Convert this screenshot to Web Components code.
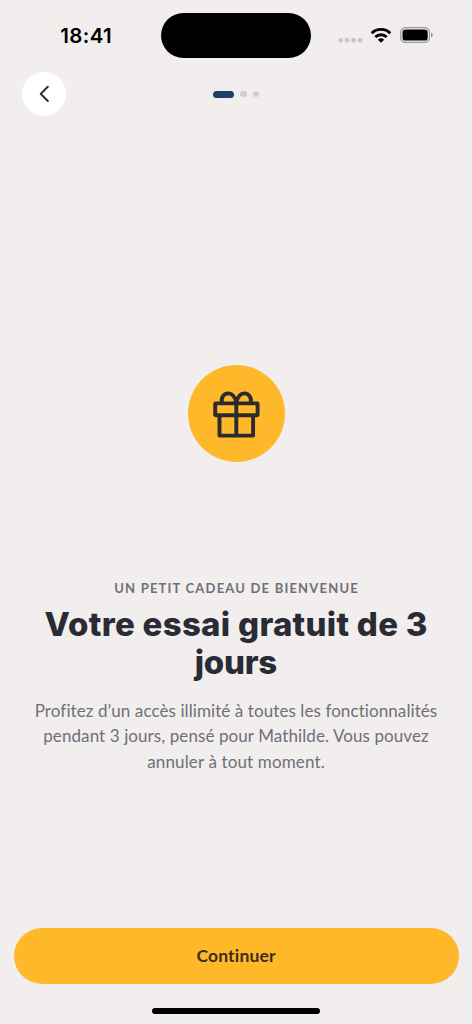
<!DOCTYPE html>
<html lang="fr">
<head>
<meta charset="utf-8">
<title>Essai gratuit</title>
<style>
html,body{margin:0;height:100%;background:#f2eeed}
</style>
</head>
<body>
<trial-screen></trial-screen>
<script>
const define = (name, html, ready) => customElements.define(name, class extends HTMLElement {
  connectedCallback() {
    if (this.shadowRoot) return;
    this.attachShadow({ mode: 'open' }).innerHTML = html;
    if (ready) ready(this);
  }
});

// One line of text, tracked so that it spans the given width.
define('text-line', `
<style>:host{display:block;text-align:center;white-space:nowrap}span{display:inline-block}</style>
<span></span>`, host => {
  const span = host.shadowRoot.querySelector('span');
  const text = host.getAttribute('text');
  span.textContent = text;
  const gap = (Number(host.getAttribute('span')) - span.getBoundingClientRect().width) / (text.length - 1);
  span.style.letterSpacing = gap + 'px';
  span.style.marginRight = -gap + 'px';
});

define('status-bar', `
<style>
:host{display:grid;grid-template-columns:161px 150px 1fr;height:58px;padding-top:13px;box-sizing:border-box;color:#000}
.time{font:600 20.5px/45px Inter,"Liberation Sans",sans-serif;padding-left:60px}
.island{height:45px;border-radius:23px;background:#000}
.icons{display:flex;padding-left:27px;height:44px}
svg{display:block}
text-line{width:52px}
</style>
<div class="time"><text-line text="18:41" span="51.5"></text-line></div>
<div class="island"></div>
<div class="icons">
<svg width="100" height="44" viewBox="0 0 100 44">
<g fill="#c9c6c6"><rect x="0.3" y="25.1" width="4.6" height="4.4" rx="1.7"/><rect x="6.8" y="25.1" width="4.6" height="4.4" rx="1.7"/><rect x="13.2" y="25.1" width="4.6" height="4.4" rx="1.7"/><rect x="19.7" y="25.1" width="4.6" height="4.4" rx="1.7"/></g>
<g fill="none" stroke="#000" stroke-width="2.9"><path d="M33.7 20.2a13.3 13.3 0 0 1 18.6 0"/><path d="M37.3 24a8.2 8.2 0 0 1 11.4 0"/></g>
<path d="M39.8 26.7a4.7 4.7 0 0 1 6.4 0L43 29.7z" fill="#000"/>
<rect x="62.7" y="14.6" width="28.8" height="14.8" rx="4.8" fill="none" stroke="#9b9898" stroke-width="1.2"/>
<rect x="64.5" y="16.6" width="25.2" height="11" rx="3.2" fill="#000"/>
<path d="M93.1 19.7c2.1.6 2.1 4 0 4.6z" fill="#8e8b8b"/>
</svg>
</div>`);

define('nav-bar', `
<style>
:host{display:grid;grid-template-columns:1fr auto 1fr;align-items:center;margin-top:14px;padding:0 22px;height:44px}
button{width:44px;height:44px;border:0;padding:0;border-radius:50%;background:#fff;display:grid;place-items:center}
.steps{display:flex;gap:6px;align-items:center}
i{width:6.4px;height:6.4px;border-radius:4px;background:#d0ced3}
i.on{width:21px;height:7px;background:#213e6b}
</style>
<button aria-label="Retour"><svg width="44" height="44" viewBox="0 0 44 44" fill="none" stroke="#292a30" stroke-width="2" stroke-linecap="round" stroke-linejoin="round"><path d="M25.8 14.8 18.7 21.9l7.1 7.1"/></svg></button>
<div class="steps"><i class="on"></i><i></i><i></i></div>`);

define('gift-badge', `
<style>
:host{display:grid;place-items:center;width:97px;height:97px;border-radius:50%;background:#ffb829}
svg{display:block}
</style>
<svg width="97" height="97" viewBox="0 0 97 97" fill="none" stroke="#2b2b2e" stroke-width="3.9" stroke-linejoin="round">
<rect x="27.2" y="38.4" width="42.4" height="11.8" rx="0.5"/><path d="M31.5 50v20.6h33.6V50M48.3 38.6v32"/><path d="M34.4 38.4C32.3 33.3 35.5 28.4 40.2 28.4c4.8 0 7 3.9 8.1 9.4 1.1-5.5 3.3-9.4 8.1-9.4 4.7 0 7.9 4.9 5.8 10"/>
</svg>`);

define('trial-copy', `
<style>
:host{display:block;font-family:Lato,"Noto Sans",sans-serif;color:#6d7079}
.eyebrow{font-size:13px;font-weight:700;line-height:18px}
h1{margin:8px 0 0;font:800 33px/38.2px Inter,Lato,sans-serif;color:#292c35}
.body{margin-top:17px;font-size:17px;line-height:25.1px}
</style>
<text-line class="eyebrow" text="UN PETIT CADEAU DE BIENVENUE" span="243.5"></text-line>
<h1><text-line text="Votre essai gratuit de 3" span="383"></text-line><text-line text="jours" span="82.5"></text-line></h1>
<div class="body">
<text-line text="Profitez d’un accès illimité à toutes les fonctionnalités" span="402.5"></text-line>
<text-line text="pendant 3 jours, pensé pour Mathilde. Vous pouvez" span="385.5"></text-line>
<text-line text="annuler à tout moment." span="177.5"></text-line>
</div>`);

define('primary-button', `
<style>
:host{display:block}
button{display:block;width:100%;height:56px;border:0;padding:0;border-radius:28px;background:#ffb829;color:#3b2d1b;font:700 17.5px/56px Lato,"Noto Sans",sans-serif}
</style>
<button><text-line text="Continuer" span="79.5"></text-line></button>`);

define('trial-screen', `
<style>
:host{display:flex;flex-direction:column;width:472px;height:1024px;background:#f2eeed;overflow:hidden}
gift-badge{margin:249.2px auto 0 188px}
trial-copy{margin-top:116.8px}
primary-button{margin:auto 13.5px 0}
.home{width:168px;height:6px;border-radius:3px;background:#000;margin:24px auto 10px}
</style>
<status-bar></status-bar>
<nav-bar></nav-bar>
<gift-badge></gift-badge>
<trial-copy></trial-copy>
<primary-button></primary-button>
<div class="home"></div>`);
</script>
</body>
</html>
